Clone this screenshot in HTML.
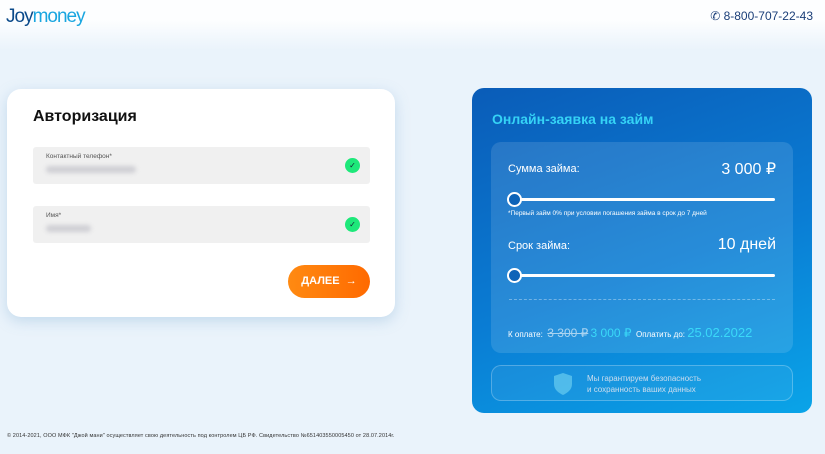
<!DOCTYPE html>
<html><head><meta charset="utf-8"><style>
*{margin:0;padding:0;box-sizing:border-box}
body{width:825px;height:454px;overflow:hidden;font-family:"Liberation Sans",sans-serif;background:linear-gradient(#fdfeff 0,#fdfeff 20px,#eaf3fb 50px,#eaf3fb 100%);position:relative}
.a{position:absolute}
.logo{left:6px;top:6px;font-size:19px;color:#1aa6e0;letter-spacing:-1px}
.logo b{color:#0b4a8a;font-weight:normal}
.phone{right:12px;top:9px;font-size:12px;color:#1a3e78}
.card{left:7px;top:89px;width:388px;height:228px;background:#fff;border-radius:14px;box-shadow:0 4px 14px rgba(120,170,210,.35)}
.card h1{position:absolute;left:26px;top:19px;font-size:16px;color:#111;font-weight:bold}
.f{position:absolute;left:26px;width:337px;height:37px;background:#f0f0f0;border-radius:3px}
.f .l{position:absolute;left:13px;top:6px;font-size:6.5px;color:#555}
.f .v{position:absolute;left:13px;top:19px;height:7px;background:#cfcfd4;border-radius:4px;filter:blur(2px)}
.ok{position:absolute;right:10px;top:11px;width:15px;height:15px;border-radius:50%;background:#1ee87a;color:#123;font-size:8px;text-align:center;line-height:15px}
.btn{position:absolute;left:281px;top:176px;width:82px;height:33px;border-radius:17px;background:linear-gradient(90deg,#ff8a12,#ff6a00);color:#fff;font-weight:bold;font-size:11px;text-align:center;line-height:33px}
.blue{left:472px;top:88px;width:340px;height:325px;border-radius:12px;background:linear-gradient(160deg,#0a5cb8,#0a7dd4 55%,#0aa4e8)}
.blue h2{position:absolute;left:20px;top:23px;font-size:14px;color:#35d3f6;font-weight:bold}
.in{position:absolute;left:19px;top:54px;width:302px;height:211px;border-radius:10px;background:rgba(255,255,255,.12)}
.t{position:absolute;color:#fff}
.tr{position:absolute;left:19px;height:3px;width:265px;background:#fff;border-radius:2px}
.kn{position:absolute;left:16px;width:15px;height:15px;border-radius:50%;border:2px solid #fff;background:#0d63b8}
.bot{position:absolute;left:19px;top:277px;width:302px;height:36px;border-radius:10px;border:1px solid rgba(255,255,255,.25);background:rgba(255,255,255,.06)}
.foot{left:7px;top:433px;font-size:5.5px;color:#333;letter-spacing:.1px}
</style></head><body>
<div class="a logo"><b>Joy</b>money</div>
<div class="a phone">✆ 8-800-707-22-43</div>
<div class="a card">
<h1>Авторизация</h1>
<div class="f" style="top:58px"><div class="l">Контактный телефон*</div><div class="v" style="width:90px"></div><div class="ok">✓</div></div>
<div class="f" style="top:117px"><div class="l">Имя*</div><div class="v" style="width:45px"></div><div class="ok">✓</div></div>
<div class="btn">ДАЛЕЕ &nbsp;→</div>
</div>
<div class="a blue">
<h2>Онлайн-заявка на займ</h2>
<div class="in">
<div class="t" style="left:17px;top:21px;font-size:11px">Сумма займа:</div>
<div class="t" style="right:17px;top:17px;font-size:16px">3 000 ₽</div>
<div class="tr" style="top:56px"></div><div class="kn" style="top:50px"></div>
<div class="t" style="left:17px;top:68px;font-size:6.5px">*Первый займ 0% при условии погашения займа в срок до 7 дней</div>
<div class="t" style="left:17px;top:98px;font-size:11px">Срок займа:</div>
<div class="t" style="right:17px;top:94px;font-size:16px">10 дней</div>
<div class="tr" style="top:132px"></div><div class="kn" style="top:126px"></div>
<div style="position:absolute;left:18px;right:18px;top:157px;border-top:1px dashed rgba(255,255,255,.35)"></div>
<div class="t" style="left:17px;top:183px;font-size:8px;white-space:nowrap">К оплате: &nbsp;<s style="font-size:12px;opacity:.6">3 300 ₽</s> <span style="font-size:12px;color:#3ad9f8">3 000 ₽</span> &nbsp;Оплатить до: <span style="font-size:13px;color:#3ad9f8">25.02.2022</span></div>
</div>
<div class="bot">
<svg style="position:absolute;left:61px;top:6px" width="20" height="24" viewBox="0 0 20 24"><path d="M10 1L19 4V12C19 18 14 21 10 23C6 21 1 18 1 12V4Z" fill="#5fc6ee" opacity=".8"/></svg>
<div class="t" style="left:95px;top:7px;font-size:8px;line-height:11px;color:#cde">Мы гарантируем безопасность<br>и сохранность ваших данных</div>
</div>
</div>
<div class="a foot">© 2014-2021, ООО МФК "Джой мани" осуществляет свою деятельность под контролем ЦБ РФ. Свидетельство №651403550005450 от 28.07.2014г.</div>
</body></html>
